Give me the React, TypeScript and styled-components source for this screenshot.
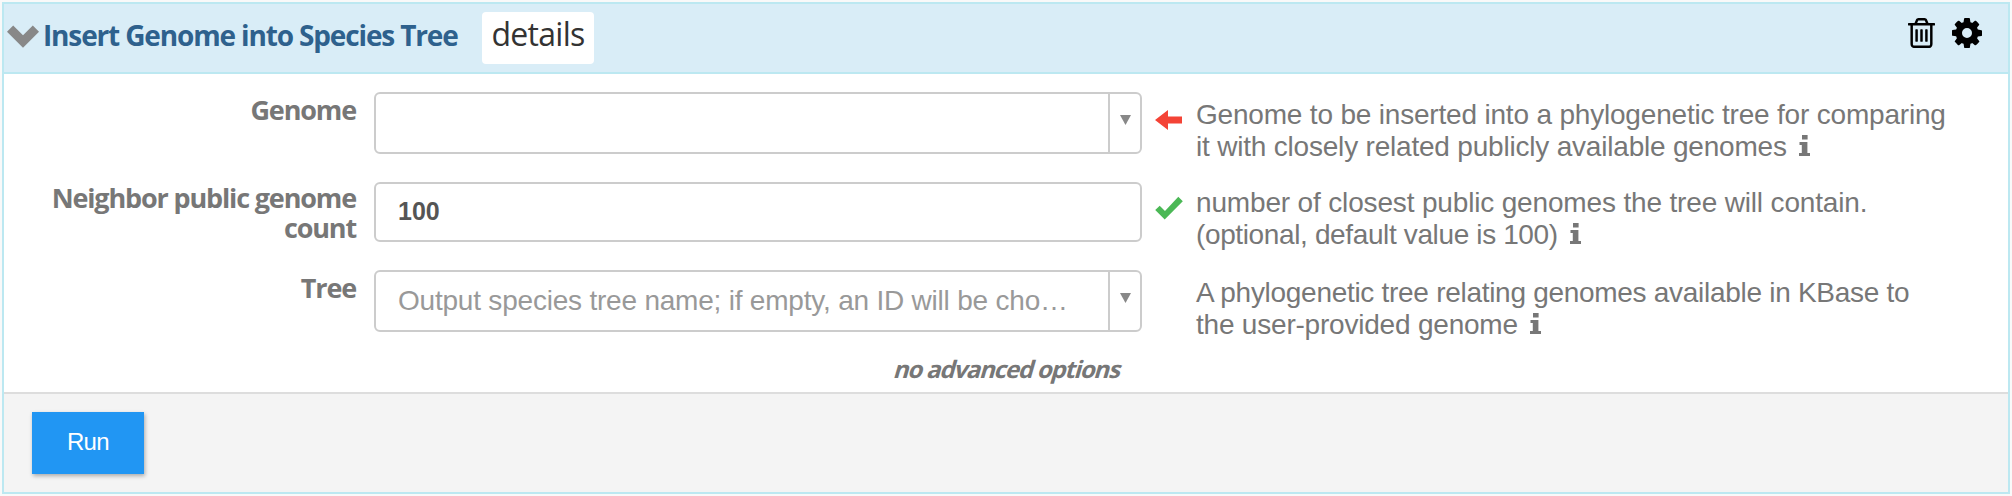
import React from "react";
import styled, { createGlobalStyle } from "styled-components";

const GlobalStyle = createGlobalStyle`
  *, *::before, *::after { box-sizing: border-box; }
  body { margin: 0; background: #f9f9f9; color: #777; }
`;

const heading = `"Open Sans", "Noto Sans", sans-serif`;
const body = `"Liberation Sans", Arial, sans-serif`;

const Page = styled.main`
  height: 496px;
  padding: 2px;
`;

const Panel = styled.section`
  display: flex;
  flex-direction: column;
  height: 492px;
  border: 2px solid #bce8f1;
  background: #fff;
`;

const Header = styled.header`
  display: flex;
  align-items: flex-start;
  height: 70px;
  padding: 8px 26px 0 3px;
  background: #d9edf7;
  border-bottom: 2px solid #bce8f1;
`;

const Chevron = styled.svg`
  width: 32px;
  height: 23px;
  margin-top: 13px;
  fill: #888;
`;

const Title = styled.h1`
  margin: 4px 0 0 4px;
  width: 439px;
  font: 700 28px/38px ${heading};
  letter-spacing: -1.15px;
  white-space: nowrap;
  color: #2e618d;
`;

const DetailsButton = styled.button`
  width: 112px;
  height: 52px;
  padding: 0 0 9px;
  border: 0;
  border-radius: 4px;
  background: #fff;
  color: #333;
  font: 400 32px/43px ${heading};
  letter-spacing: -0.7px;
`;

const Tools = styled.div`
  display: flex;
  gap: 17px;
  margin: 6px 0 0 auto;
`;

const ToolIcon = styled.svg<{ $width: number }>`
  width: ${(p) => p.$width}px;
  height: 30px;
  fill: #000;
`;

const Form = styled.div`
  display: flex;
  flex-direction: column;
  height: 318px;
  padding-top: 18px;
`;

const Row = styled.div<{ $height: number }>`
  display: grid;
  grid-template-columns: 352px 768px 43px 1fr;
  height: ${(p) => p.$height}px;
`;

const Label = styled.label<{ $top?: number }>`
  padding: ${(p) => p.$top ?? 3}px 0 0 20px;
  font: 700 27px/30px ${heading};
  letter-spacing: -1.15px;
  text-align: right;
`;

const Control = styled.div<{ $height: number }>`
  display: flex;
  height: ${(p) => p.$height}px;
  margin-left: 18px;
  border: 2px solid #ccc;
  border-radius: 6px;
  width: 768px;
`;

const Value = styled.div<{ $strong?: boolean }>`
  flex: 1;
  padding-left: 22px;
  white-space: nowrap;
  font-family: ${body};
  font-size: ${(p) => (p.$strong ? 25 : 28)}px;
  font-weight: ${(p) => (p.$strong ? 700 : 400)};
  line-height: ${(p) => (p.$strong ? 55 : 58)}px;
  letter-spacing: ${(p) => (p.$strong ? 0 : -0.21)}px;
  color: ${(p) => (p.$strong ? "#555" : "#999")};
`;

const DropArrow = styled.div`
  width: 32px;
  border-left: 2px solid #ccc;
  padding: 21px 0 0 10px;
  line-height: 0;
`;

const Triangle = styled.svg`
  width: 11px;
  height: 10px;
  fill: #888;
`;

const Status = styled.div<{ $top: number }>`
  padding: ${(p) => p.$top}px 0 0 31px;
  line-height: 0;
`;

const Arrow = styled.svg`
  width: 27px;
  height: 20px;
  fill: #f44336;
`;

const Check = styled.svg`
  width: 28px;
  height: 24px;
  fill: #4bb856;
`;

const Help = styled.div<{ $top: number }>`
  padding: ${(p) => p.$top}px 0 0 29px;
  font: 400 28px/32px ${body};
  white-space: nowrap;
`;

const HelpLine = styled.div<{ $spacing: number }>`
  letter-spacing: ${(p) => p.$spacing}px;
`;

const Info = styled.svg`
  width: 11px;
  height: 21px;
  margin-left: 12px;
  fill: #777;
`;

const Advanced = styled.div`
  width: 1117px;
  margin-top: -1px;
  font: 700 24px/32px ${heading};
  letter-spacing: -1.2px;
  text-align: right;
`;

const Slanted = styled.em`
  display: inline-block;
  font-style: normal;
  transform: skewX(-16deg);
`;

const Footer = styled.footer`
  flex: 1;
  padding: 18px 28px;
  border-top: 2px solid #ddd;
  background: #f4f4f4;
`;

const RunButton = styled.button`
  width: 112px;
  height: 62px;
  padding: 0 0 3px;
  border: 0;
  background: #2196f3;
  box-shadow: 1px 2px 4px rgba(0, 0, 0, 0.3);
  color: #fff;
  font: 400 24px/28px ${body};
  letter-spacing: -0.6px;
`;

const InfoIcon = () => (
  <Info viewBox="0 0 11 21">
    <path d="M3 0h5.6v4.6H3zM.5 7h7.9v11H11v3H0v-3h2.8v-7.9H.5z" />
  </Info>
);

const Dropdown = () => (
  <DropArrow>
    <Triangle viewBox="0 0 11 10"><path d="M0 0h11L5.5 10z" /></Triangle>
  </DropArrow>
);

export default function App() {
  return (
    <Page>
      <GlobalStyle />
      <Panel>
        <Header>
          <Chevron viewBox="0 0 32 23">
            <path d="M6.2.5 16 10.3 25.8.5 32 6.7 16 22.7 0 6.7z" />
          </Chevron>
          <Title>Insert Genome into Species Tree</Title>
          <DetailsButton>details</DetailsButton>
          <Tools>
            <ToolIcon $width={27} viewBox="192 128 1408 1536" preserveAspectRatio="none">
              <path d="M704 736v576q0 14-9 23t-23 9h-64q-14 0-23-9t-9-23v-576q0-14 9-23t23-9h64q14 0 23 9t9 23zm256 0v576q0 14-9 23t-23 9h-64q-14 0-23-9t-9-23v-576q0-14 9-23t23-9h64q14 0 23 9t9 23zm256 0v576q0 14-9 23t-23 9h-64q-14 0-23-9t-9-23v-576q0-14 9-23t23-9h64q14 0 23 9t9 23zm128 724v-948h-896v948q0 22 7 40.5t14.5 27 10.5 8.5h832q3 0 10.5-8.5t14.5-27 7-40.5zm-672-1076h448l-48-117q-7-9-17-11h-317q-10 2-17 11zm928 32v64q0 14-9 23t-23 9h-96v948q0 83-47 143.5t-113 60.5h-832q-66 0-113-58.5t-47-141.5v-952h-96q-14 0-23-9t-9-23v-64q0-14 9-23t23-9h309l70-167q15-37 54-63t79-26h320q40 0 79 26t54 63l70 167h309q14 0 23 9t9 23z" />
            </ToolIcon>
            <ToolIcon $width={30} viewBox="0 128 1536 1536">
              <path d="M1024 896q0-106-75-181t-181-75-181 75-75 181 75 181 181 75 181-75 75-181zm512-109v222q0 12-8 23t-20 13l-185 28q-19 54-39 91 35 50 107 138 10 12 10 25t-9 23q-27 37-99 108t-94 71q-12 0-26-9l-138-108q-44 23-91 38-16 136-29 186-7 28-36 28h-222q-14 0-24.5-8.5t-11.5-21.5l-28-184q-49-16-90-37l-141 107q-10 9-25 9-14 0-25-11-126-114-165-168-7-10-7-23 0-12 8-23 15-21 51-66.5t54-70.5q-27-50-41-99l-183-27q-13-2-21-12.5t-8-23.5v-222q0-12 8-23t19-13l186-28q14-46 39-92-40-57-107-138-10-12-10-24 0-10 9-23 26-36 98.5-107.5t94.5-71.5q13 0 26 10l138 107q44-23 91-38 16-136 29-186 7-28 36-28h222q14 0 24.5 8.5t11.5 21.5l28 184q49 16 90 37l142-107q9-9 24-9 13 0 25 10 129 119 165 170 7 8 7 22 0 12-8 23-15 21-51 66.5t-54 70.5q26 50 41 98l183 28q13 2 21 12.5t8 23.5z" />
            </ToolIcon>
          </Tools>
        </Header>
        <Form>
          <Row $height={90}>
            <Label>Genome</Label>
            <Control $height={62}><Value /><Dropdown /></Control>
            <Status $top={18}>
              <Arrow viewBox="0 0 27 20"><path d="M0 10 13 0v6.5h14v7H13V20z" /></Arrow>
            </Status>
            <Help $top={7}>
              <HelpLine $spacing={-0.19}>Genome to be inserted into a phylogenetic tree for comparing</HelpLine>
              <HelpLine $spacing={-0.2}>it with closely related publicly available genomes<InfoIcon /></HelpLine>
            </Help>
          </Row>
          <Row $height={88}>
            <Label $top={1}>Neighbor public genome count</Label>
            <Control $height={60}><Value $strong>100</Value></Control>
            <Status $top={14}>
              <Check viewBox="0 0 28 24"><path d="M4.7 9.8 10 15 23.3.8 27.8 5.2 9.7 23.4.2 14z" /></Check>
            </Status>
            <Help $top={5}>
              <HelpLine $spacing={-0.16}>number of closest public genomes the tree will contain.</HelpLine>
              <HelpLine $spacing={-0.37}>(optional, default value is 100)<InfoIcon /></HelpLine>
            </Help>
          </Row>
          <Row $height={84}>
            <Label>Tree</Label>
            <Control $height={62}>
              <Value>Output species tree name; if empty, an ID will be cho…</Value>
              <Dropdown />
            </Control>
            <Status $top={0} />
            <Help $top={7}>
              <HelpLine $spacing={-0.29}>A phylogenetic tree relating genomes available in KBase to</HelpLine>
              <HelpLine $spacing={-0.21}>the user-provided genome<InfoIcon /></HelpLine>
            </Help>
          </Row>
          <Advanced><Slanted>no advanced options</Slanted></Advanced>
        </Form>
        <Footer><RunButton>Run</RunButton></Footer>
      </Panel>
    </Page>
  );
}
